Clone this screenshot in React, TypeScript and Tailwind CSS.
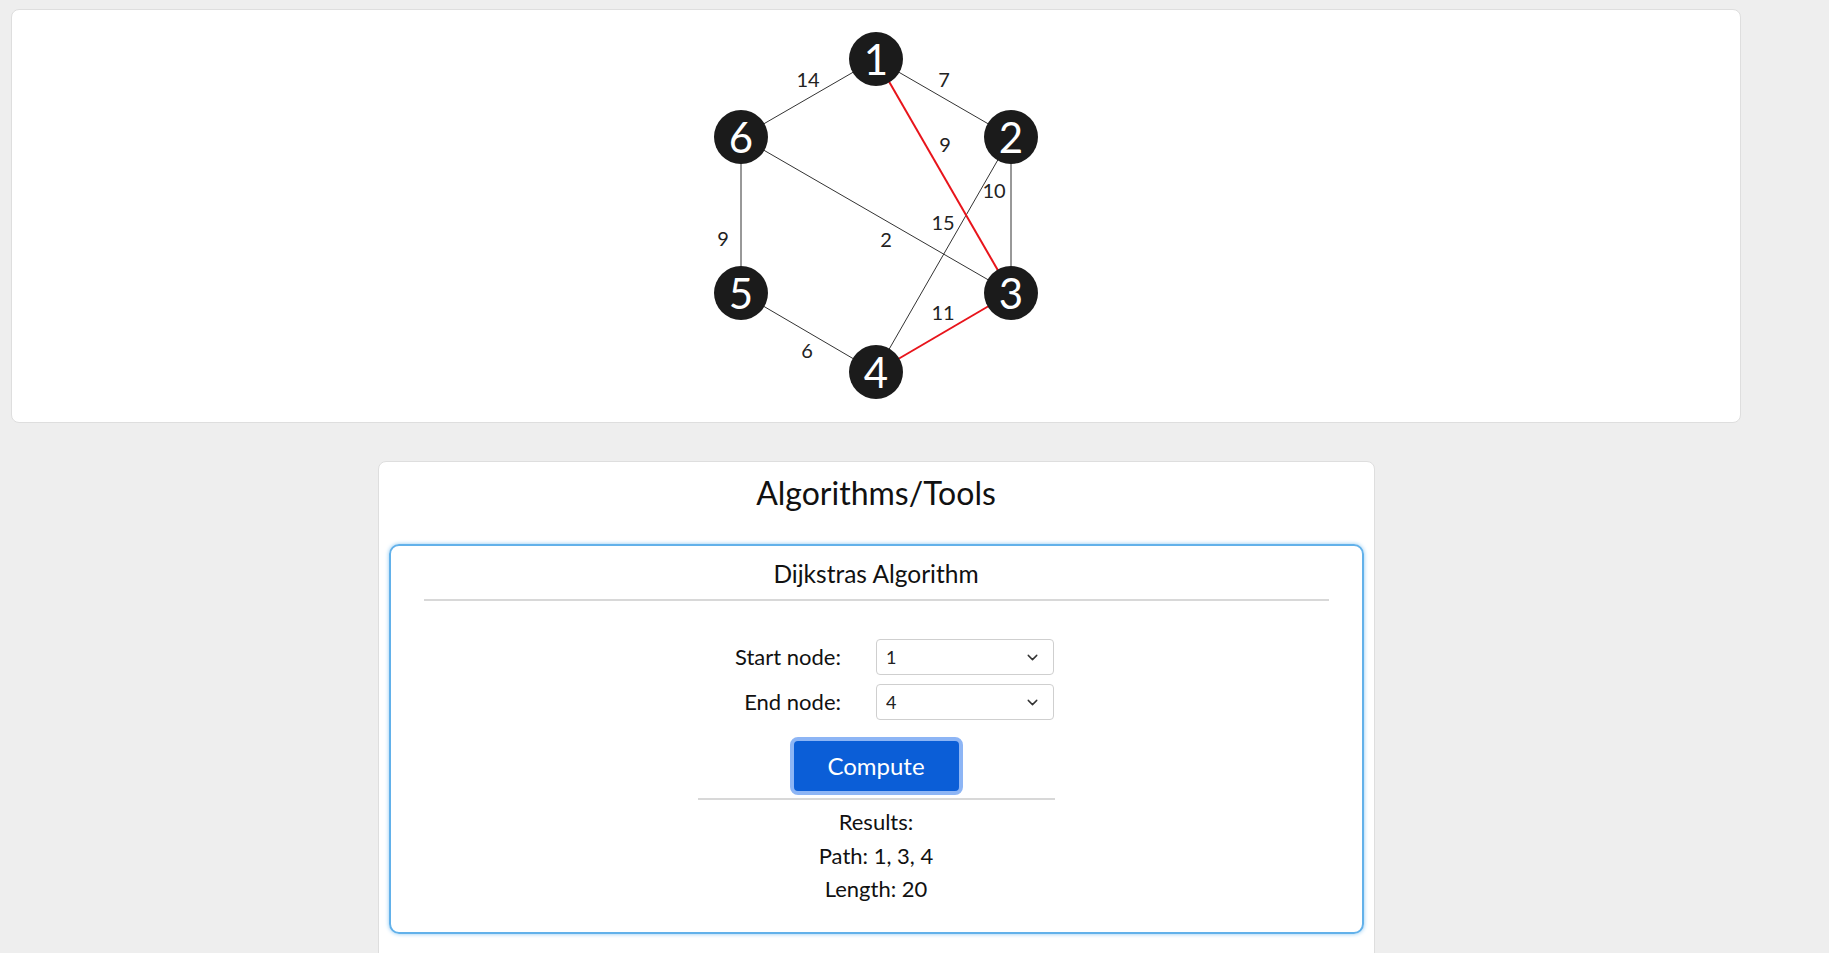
import { ChevronDown } from 'lucide-react';

type Node = { id: number; x: number; y: number };
type Edge = { a: number; b: number; w: number; lx: number; ly: number; onPath?: boolean };

const NODES: Node[] = [
  { id: 1, x: 200, y: 49 },
  { id: 2, x: 335, y: 127 },
  { id: 3, x: 335, y: 283 },
  { id: 4, x: 200, y: 362 },
  { id: 5, x: 65, y: 283 },
  { id: 6, x: 65, y: 127 },
];

const EDGES: Edge[] = [
  { a: 1, b: 6, w: 14, lx: 132, ly: 69 },
  { a: 1, b: 2, w: 7, lx: 268, ly: 69 },
  { a: 2, b: 3, w: 10, lx: 318, ly: 180 },
  { a: 2, b: 4, w: 15, lx: 267, ly: 212 },
  { a: 6, b: 3, w: 2, lx: 210, ly: 229 },
  { a: 6, b: 5, w: 9, lx: 47, ly: 228 },
  { a: 5, b: 4, w: 6, lx: 131, ly: 340 },
  { a: 1, b: 3, w: 9, lx: 269, ly: 134, onPath: true },
  { a: 4, b: 3, w: 11, lx: 267, ly: 302, onPath: true },
];

const pos = (id: number) => NODES.find((n) => n.id === id)!;

function Graph() {
  return (
    <svg width={400} height={412} viewBox="0 0 400 412" className="block">
      {EDGES.map((e) => {
        const a = pos(e.a);
        const b = pos(e.b);
        return (
          <line
            key={`${e.a}-${e.b}`}
            x1={a.x}
            y1={a.y}
            x2={b.x}
            y2={b.y}
            stroke={e.onPath ? '#e8141b' : '#333333'}
            strokeWidth={e.onPath ? 2 : 1}
          />
        );
      })}
      {EDGES.map((e) => (
        <text
          key={`l${e.a}-${e.b}`}
          x={e.lx}
          y={e.ly}
          textAnchor="middle"
          dominantBaseline="central"
          fontSize={20}
          fill="#222"
        >
          {e.w}
        </text>
      ))}
      {NODES.map((n) => (
        <g key={n.id}>
          <circle cx={n.x} cy={n.y} r={27} fill="#1b1b1b" />
          <text
            x={n.x}
            y={n.y}
            textAnchor="middle"
            dominantBaseline="central"
            fontSize={42}
            fill="#ffffff"
          >
            {n.id}
          </text>
        </g>
      ))}
    </svg>
  );
}

function NodeSelect({ value }: { value: string }) {
  return (
    <div className="relative w-[178px]">
      <select
        defaultValue={value}
        className="h-[36px] w-full appearance-none rounded-[4px] border border-[#cfcfcf] bg-white pl-[9px] text-[18px] text-[#222]"
      >
        {[1, 2, 3, 4, 5, 6].map((n) => (
          <option key={n} value={String(n)}>
            {n}
          </option>
        ))}
      </select>
      <ChevronDown
        size={17}
        strokeWidth={2}
        className="pointer-events-none absolute right-[13px] top-[10px] text-[#333]"
      />
    </div>
  );
}

export default function App() {
  return (
    <div className="min-h-screen bg-[#eeeeee] font-['Lato','Liberation_Sans',sans-serif] text-[#111]">
      <div className="w-[1752px] pt-[9px]">
        <section className="mx-[11px] flex h-[414px] justify-center rounded-[8px] border border-[#dedede] bg-white">
          <Graph />
        </section>

        <section className="mx-auto mt-[38px] w-[997px] rounded-t-[8px] border border-[#dedede] bg-white px-[10px] pb-[40px]">
          <h2 className="pt-[11px] text-center text-[32px] leading-[40px]">Algorithms/Tools</h2>

          <div className="mt-[31px] rounded-[10px] border-2 border-[#62b1ea] pb-[26px] shadow-[0_0_4px_#8cc8f2]">
            <h3 className="pt-[13px] text-center text-[24.5px] leading-[30px]">Dijkstras Algorithm</h3>
            <div className="mx-[33px] mt-[10px] h-[2px] bg-[#d8d8d8]" />

            <div className="mx-auto mt-[38px] flex w-[357px] flex-col items-center">
              <div className="grid grid-cols-[143px_178px] items-center gap-x-[35px] gap-y-[9px]">
                <label className="text-right text-[22px] leading-[28px]">Start node:</label>
                <NodeSelect value="1" />
                <label className="text-right text-[22px] leading-[28px]">End node:</label>
                <NodeSelect value="4" />
              </div>

              <button className="mt-[17px] h-[58px] w-[173px] rounded-[8px] border-[4px] border-[#8db5f5] bg-[#0b5ed7] text-[24px] text-white">
                Compute
              </button>

              <div className="mt-[3px] h-[2px] w-full bg-[#d8d8d8]" />

              <div className="mt-[5px] text-center text-[22px] leading-[33.5px]">
                <p>Results:</p>
                <p>Path: 1, 3, 4</p>
                <p>Length: 20</p>
              </div>
            </div>
          </div>
        </section>
      </div>
    </div>
  );
}
